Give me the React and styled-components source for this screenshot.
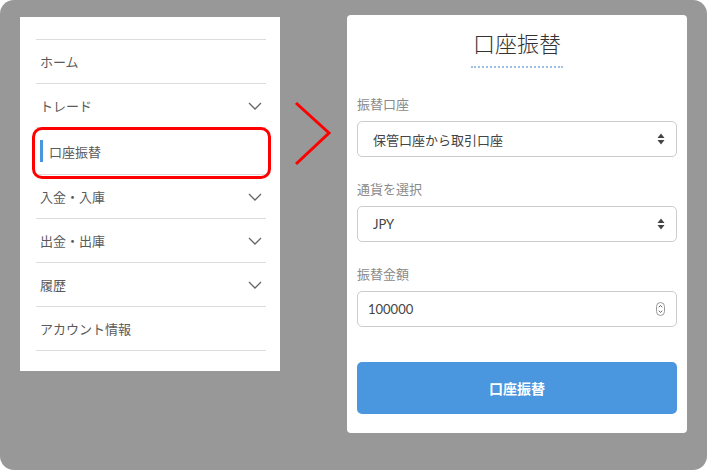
import React from "react";
import styled, { createGlobalStyle } from "styled-components";

const GlobalStyle = createGlobalStyle`
  html, body {
    margin: 0;
    padding: 0;
    background: #ffffff;
  }
  body {
    font-family: Lato, "Noto Sans CJK JP", sans-serif;
  }
`;

const menuItems = [
  { label: "ホーム" },
  { label: "トレード", toggle: true },
  { label: "口座振替", sub: true, active: true },
  { label: "入金・入庫", toggle: true },
  { label: "出金・出庫", toggle: true },
  { label: "履歴", toggle: true },
  { label: "アカウント情報" },
];

const Chevron = () => (
  <svg width="14" height="8" viewBox="0 0 14 8">
    <polyline points="1,1 7,7 13,1" fill="none" stroke="#666" strokeWidth="1.3" />
  </svg>
);

const SelectArrows = () => (
  <svg width="8" height="12" viewBox="0 0 8 12">
    <polygon points="4,0.5 7.5,5 0.5,5" fill="#444" />
    <polygon points="4,11.5 7.5,7 0.5,7" fill="#444" />
  </svg>
);

const Spinner = () => (
  <svg width="9" height="14" viewBox="0 0 9 14">
    <rect x="0.5" y="0.5" width="8" height="13" rx="4" fill="#fff" stroke="#999" />
    <polyline points="2.8,5.3 4.5,3.5 6.2,5.3" fill="none" stroke="#555" strokeWidth="0.9" />
    <polyline points="2.8,8.7 4.5,10.5 6.2,8.7" fill="none" stroke="#555" strokeWidth="0.9" />
  </svg>
);

const App = () => {
  return (
    <>
      <GlobalStyle />
      <Screen>
        <SideMenu>
          <MenuList>
            {menuItems.map((item) => (
              <MenuRow key={item.label} $sub={item.sub} $active={item.active}>
                <span>{item.label}</span>
                {item.toggle && <Chevron />}
              </MenuRow>
            ))}
          </MenuList>
        </SideMenu>

        <Pointer width="67" height="70" viewBox="0 0 67 70">
          <polyline points="16,4 49,34 16,65" fill="none" stroke="#ff0000" strokeWidth="3" />
        </Pointer>

        <Panel>
          <Title>口座振替</Title>
          <Form>
            <Field>
              <Label>振替口座</Label>
              <SelectBox>
                <span>保管口座から取引口座</span>
                <SelectArrows />
              </SelectBox>
            </Field>
            <Field>
              <Label>通貨を選択</Label>
              <SelectBox>
                <span>JPY</span>
                <SelectArrows />
              </SelectBox>
            </Field>
            <Field>
              <Label>振替金額</Label>
              <SelectBox $input>
                <span>100000</span>
                <Spinner />
              </SelectBox>
            </Field>
          </Form>
          <SubmitButton>口座振替</SubmitButton>
        </Panel>
      </Screen>
    </>
  );
};

const Screen = styled.div`
  width: 707px;
  height: 470px;
  box-sizing: border-box;
  background: #989898;
  border-radius: 14px;
  display: flex;
  align-items: flex-start;
  padding-left: 20px;
`;

const SideMenu = styled.nav`
  width: 260px;
  margin-top: 17px;
  box-sizing: border-box;
  background: #ffffff;
  padding: 22px 14px 20px 16px;
`;

const MenuList = styled.ul`
  list-style: none;
  margin: 0;
  padding: 0;
  border-top: 1px solid #dddddd;
`;

const MenuRow = styled.li`
  position: relative;
  height: ${(p) => (p.$sub ? "46px" : "43px")};
  border-bottom: 1px solid #dddddd;
  display: flex;
  align-items: center;
  justify-content: space-between;
  padding: 0 4px 0 ${(p) => (p.$sub ? "13px" : "4px")};
  font-family: "Noto Sans CJK JP", sans-serif;
  font-size: 13px;
  color: #5a5a5a;

  ${(p) =>
    p.$active &&
    `
    &::before {
      content: "";
      position: absolute;
      left: 4px;
      top: 50%;
      transform: translateY(-50%);
      width: 3px;
      height: 22px;
      background: #4a97df;
    }
    &::after {
      content: "";
      position: absolute;
      left: -4px;
      right: -5px;
      top: -1px;
      bottom: -5px;
      border: 3px solid #ff0000;
      border-radius: 10px;
    }
  `}
`;

const Pointer = styled.svg`
  display: block;
  margin-top: 99px;
  flex: none;
`;

const Panel = styled.section`
  width: 340px;
  height: 418px;
  margin-top: 15px;
  box-sizing: border-box;
  background: #ffffff;
  border-radius: 4px;
  padding: 12px 10px 0;
  display: flex;
  flex-direction: column;
`;

const Title = styled.h1`
  align-self: center;
  margin: 0;
  padding: 0 2px 9px;
  font-family: "Noto Sans CJK JP", sans-serif;
  font-weight: 300;
  font-size: 22px;
  line-height: 30px;
  color: #333333;
  border-bottom: 2px dotted #9cc1e4;
`;

const Form = styled.div`
  display: flex;
  flex-direction: column;
  gap: 23px;
  margin-top: 27px;
`;

const Field = styled.div`
  display: flex;
  flex-direction: column;
  gap: 9px;
`;

const Label = styled.label`
  font-family: "Noto Sans CJK JP", sans-serif;
  font-size: 13px;
  line-height: 17px;
  color: #8a8a8a;
`;

const SelectBox = styled.div`
  height: 36px;
  box-sizing: border-box;
  border: 1px solid #cccccc;
  border-radius: 5px;
  display: flex;
  align-items: center;
  justify-content: space-between;
  padding: 0 11px 0 ${(p) => (p.$input ? "10px" : "15px")};
  font-family: Lato, "Noto Sans CJK JP", sans-serif;
  font-size: 13px;
  color: #444444;
`;

const SubmitButton = styled.button`
  margin-top: 35px;
  height: 52px;
  border: none;
  border-radius: 5px;
  background: #4a97df;
  color: #ffffff;
  font-family: "Noto Sans CJK JP", sans-serif;
  font-weight: 700;
  font-size: 14px;
  cursor: pointer;
`;

export default App;
